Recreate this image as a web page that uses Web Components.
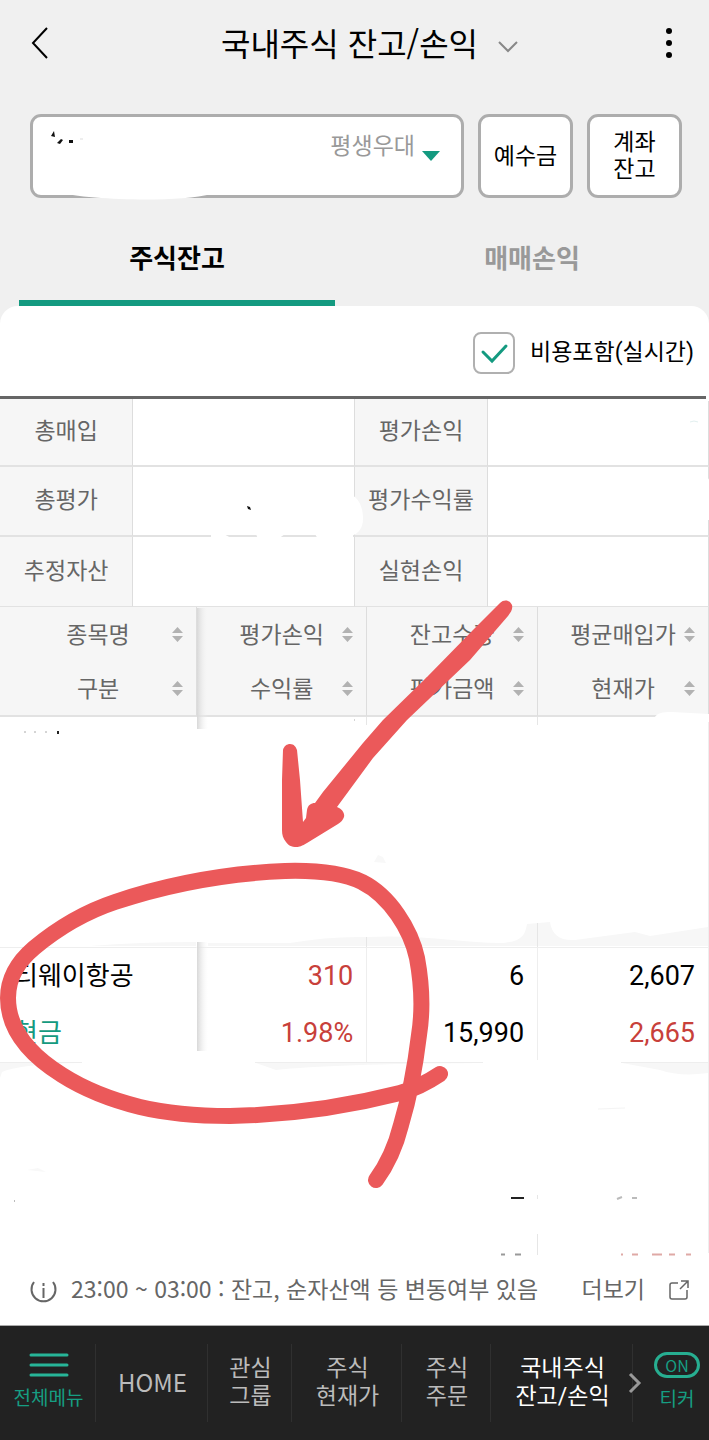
<!DOCTYPE html>
<html lang="ko">
<head>
<meta charset="utf-8">
<meta name="viewport" content="width=device-width, initial-scale=1">
<title>국내주식 잔고/손익</title>
<style>
html,body{margin:0;padding:0}
body{font-family:"Noto Sans CJK KR","Noto Sans",sans-serif;color:#000;background:#f0f0f0}
</style>
</head>
<body>
<balance-page></balance-page>
<script>
const RESET = `<style>
*,*::before,*::after{box-sizing:border-box}
button,select{font:inherit;color:inherit;background:none;border:0;padding:0;margin:0;cursor:pointer}
svg{display:block;fill:none}
</style>`;
const define = (name, html) => customElements.define(name, class extends HTMLElement {
  constructor(){ super(); this.attachShadow({mode:'open'}).innerHTML = RESET + html; }
});

define('app-header', `<style>
:host{display:grid;grid-template-columns:1fr auto 1fr;align-items:center;height:86px;padding:0 30px}
h1{margin:0;padding-left:30px;font-size:32px;line-height:48px;font-weight:400}
h1 button{display:flex;align-items:center;gap:20px;padding-bottom:2px}
h1 svg{margin-top:10px}
.more{justify-self:end;padding:0 7px}
</style>
<button aria-label="뒤로"><svg width="18" height="32" viewBox="0 0 18 32"><path d="M17 1 3 16 17 31" stroke="#000" stroke-width="2"/></svg></button>
<h1><button>국내주식 잔고/손익<svg width="20" height="12" viewBox="0 0 20 12"><path d="M1 1 10 10 19 1" stroke="#888" stroke-width="2"/></svg></button></h1>
<button class="more" aria-label="더보기 메뉴"><svg width="6" height="30" viewBox="0 0 6 30"><g fill="#000"><circle cx="3" cy="3" r="3"/><circle cx="3" cy="15" r="3"/><circle cx="3" cy="27" r="3"/></g></svg></button>`);

define('account-bar', `<style>
:host{display:flex;gap:14px;padding:28px 27px 0 30px;font-family:Roboto,"Noto Sans CJK KR",sans-serif;font-size:23px;line-height:27px}
.pick{position:relative;flex:1;height:84px}
select,.box{height:84px;border:3px solid #adadad;border-radius:11px;background:#fff}
select{appearance:none;width:100%;padding:0 46px 20px 20px;color:#999;text-align-last:right}
.pick svg{position:absolute;right:24px;top:37px;pointer-events:none}
.box{width:95px}
</style>
<div class="pick"><select aria-label="계좌 선택"><option>평생우대</option></select>
<svg width="18" height="10" viewBox="0 0 18 10"><path d="M0 0H18L9 10Z" fill="#149a80"/></svg></div>
<button class="box">예수금</button><button class="box">계좌<br>잔고</button>`);

define('tab-bar', `<style>
:host{display:grid;grid-template-columns:1fr 1fr;gap:39px;padding:0 19px}
button{height:108px;padding-top:16px;border-bottom:6px solid transparent;font-size:26px;line-height:38px;font-weight:700;color:#999}
[aria-selected=true]{color:#000;border-color:#149a80}
</style>
<button role="tab" aria-selected="true">주식잔고</button><button role="tab" aria-selected="false">매매손익</button>`);

define('cost-toggle', `<style>
:host{display:flex;justify-content:flex-end;align-items:center;height:90px;padding:4px 15px 0}
label{display:flex;align-items:center;gap:15px;font-family:Roboto,"Noto Sans CJK KR",sans-serif;font-size:23px;line-height:34px}
.mark{display:grid}
.mark>*{grid-area:1/1}
input{appearance:none;width:42px;height:42px;margin:0;border:2px solid #b0b0b0;border-radius:8px;background:#fff}
svg{pointer-events:none;opacity:0}
input:checked+svg{opacity:1}
</style>
<label><span class="mark"><input type="checkbox" checked><svg width="42" height="42" viewBox="0 0 42 42"><path d="M10 20 19 29 33 14" stroke="#149a80" stroke-width="3" stroke-linecap="round"/></svg></span>비용포함(실시간)</label>`);

define('summary-table', `<style>
:host{display:block;border-top:3px solid #666}
table{width:100%;table-layout:fixed;border-spacing:0}
th,td{height:70px;padding:0 0 6px;border-right:1px solid #ddd;border-bottom:2px solid #e2e2e2}
tr:first-child>*{height:68px}
tr:last-child>*{border-bottom-width:1px}
th{background:#f6f6f6;color:#666;font-size:23px;line-height:34px;font-weight:400;white-space:nowrap}
td{background:#fff}
</style>
<table><colgroup><col style="width:18.8%"><col style="width:31.3%"><col style="width:18.7%"><col></colgroup>
<tr><th scope="row">총매입</th><td></td><th scope="row">평가손익</th><td></td></tr>
<tr><th scope="row">총평가</th><td></td><th scope="row">평가수익률</th><td></td></tr>
<tr><th scope="row">추정자산</th><td></td><th scope="row">실현손익</th><td></td></tr></table>`);

define('sort-label', `<style>
:host{display:block}
button{display:grid;grid-template-columns:24px 1fr 24px;align-items:center;width:100%;height:54px;padding-bottom:2px;font-size:23px;line-height:34px;white-space:nowrap}
span{grid-column:2}
svg{margin-top:3px}
</style>
<button><span><slot></slot></span><svg width="11" height="16" viewBox="0 0 11 16"><path d="M0 6 5.500 0 11 6ZM0 9H11L5.500 15Z" fill="#b2b2b2"/></svg></button>`);

define('holdings-table', `<style>
:host{display:block}
table{width:100%;table-layout:fixed;border-spacing:0}
th,td{padding:0}
thead th{height:110px;background:#f6f6f6;color:#666;font-weight:400;border-right:1px solid #ddd;border-bottom:2px solid #e2e2e2}
.blank td{height:230px}
.blank.last td{height:190px}
td:last-child{border-right:1px solid #eee}
.row>*{height:116px;border-right:1px solid #eee;border-top:1px solid #eee;border-bottom:1px solid #eee;font-family:Roboto,"Noto Sans CJK KR",sans-serif;font-size:27px;line-height:57px;text-align:right;padding-right:13px}
.row th{font-size:26px;font-weight:400;text-align:left;padding:0 0 0 14px;border-right-color:transparent}
.up{color:#c8403a}.kind{color:#149a80}
.row div{height:57px}
</style>
<table><colgroup><col style="width:27.8%"><col style="width:24%"><col style="width:24.1%"><col></colgroup>
<thead><tr>
<th scope="col"><sort-label>종목명</sort-label><sort-label>구분</sort-label></th>
<th scope="col"><sort-label>평가손익</sort-label><sort-label>수익률</sort-label></th>
<th scope="col"><sort-label>잔고수량</sort-label><sort-label>평가금액</sort-label></th>
<th scope="col"><sort-label>평균매입가</sort-label><sort-label>현재가</sort-label></th>
</tr></thead>
<tbody>
<tr class="blank"><td></td><td></td><td></td><td></td></tr>
<tr class="row"><th scope="row"><div>티웨이항공</div><div class="kind">현금</div></th>
<td class="up"><div>310</div><div>1.98%</div></td>
<td><div>6</div><div>15,990</div></td>
<td><div>2,607</div><div class="up">2,665</div></td></tr>
<tr class="blank last"><td></td><td></td><td></td><td></td></tr>
</tbody></table>`);

define('notice-bar', `<style>
:host{display:flex;align-items:center;height:70px;padding:0 20px 4px 30px;color:#666;font-size:23px;line-height:34px;white-space:nowrap}
p{margin:0 auto 0 14px}
a{display:flex;align-items:center;gap:24px;color:inherit;text-decoration:none}
svg{margin-top:7px}
a svg{margin-top:4px}
</style>
<svg width="27" height="26" viewBox="0 0 27 26" stroke="#666" stroke-width="2"><path d="M4 3A12 12 0 1 0 23 3"/><path d="M13.500 9V19M13.500 4V7"/></svg>
<p>23:00 ~ 03:00 : 잔고, 순자산액 등 변동여부 있음</p>
<a href="#more">더보기<svg width="20" height="20" viewBox="0 0 20 20" stroke="#666" stroke-width="1.500"><path d="M9 3H3Q1 3 1 5V17Q1 19 3 19H16Q18 19 18 17V10M12 1H19V8M19 1 11 9"/></svg></a>`);

define('bottom-nav', `<style>
:host{display:block;background:#222;border-top:1px solid #aaa}
nav{display:grid;grid-template-columns:96fr 112fr 84fr 110fr 89fr 142fr 76fr;height:114px;padding:18px 0;color:#bbb;font-family:Roboto,"Noto Sans CJK KR",sans-serif;font-size:23px;line-height:28px}
a{position:relative;display:flex;flex-direction:column;align-items:center;justify-content:center;color:inherit;text-decoration:none;text-align:center;white-space:nowrap;border-right:1px solid #303030;padding-left:2px}
.accent{color:#169e82;font-size:19px;gap:8px}
.home{font-family:"Noto Sans CJK KR",sans-serif;font-size:24px;padding-bottom:2px}
.on{color:#fff}
.on svg{position:absolute;right:-10px;top:28px;z-index:1}
a:last-child{border:0;padding-left:12px}
.pill{border:3px solid #27ae91;border-radius:14px;width:46px;height:26px;font-family:"Noto Sans CJK KR",sans-serif;font-size:16px;line-height:20px}
</style>
<nav>
<a href="#all" class="accent"><svg width="40" height="24" viewBox="0 0 40 24"><path d="M2 2H38M2 12H38M2 22H38" stroke="#27b598" stroke-width="3" stroke-linecap="round"/></svg><span>전체메뉴</span></a>
<a href="#home" class="home">HOME</a>
<a href="#fav">관심<br>그룹</a>
<a href="#price">주식<br>현재가</a>
<a href="#order">주식<br>주문</a>
<a href="#balance" class="on" aria-current="page"><span>국내주식<br>잔고/손익</span><svg width="14" height="22" viewBox="0 0 14 22"><path d="M2 2 11 11 2 20" stroke="#999" stroke-width="3"/></svg></a>
<a href="#ticker" class="accent"><span class="pill">ON</span><span>티커</span></a>
</nav>`);

/* Freehand marks drawn over the whole screen */
define('ink-layer', `<style>
:host{position:absolute;inset:0;pointer-events:none}
svg{width:100%;height:auto}
</style>
<svg viewBox="0 0 709 1440" aria-hidden="true">
<defs><linearGradient id="s"><stop stop-color="#d8d8d8"/><stop offset="1" stop-color="#f6f6f6" stop-opacity="0"/></linearGradient></defs>
<path d="M55 192C90 200 175 203 212 194L205 188H60Z" fill="#fff"/>
<path d="M51 136 54 131 55 137ZM57 143 61 139 63 140 60 144ZM69 140H73V143H69Z" fill="#111"/>
<path d="M80 139H83" stroke="#ddd"/>
<path d="M340 490C358 494 363 505 363 519C363 528 358 534 353 535H340ZM211 534Q220 530 232 539H211ZM256 534H285L278 539H258ZM315 534H353V539H318Z" fill="#fff"/>
<path d="M247 506 250 507 251 510 248 509Z" fill="#111"/>
<path d="M690 422Q694 420 698 422" stroke="#e2efef"/>
<path d="M706 396H709V401H706ZM706 478Q709 478 709 480V520H706ZM654 720Q655 711 672 712L709 714V722H654Z" fill="#fff"/>
<rect x="197" y="608" width="11" height="121" fill="url(#s)"/>
<rect x="197" y="942" width="11" height="109" fill="url(#s)"/>
<path d="M24 732H26M34 732H36M45 732H47M354 720H355" stroke="#aaa"/><path d="M57 731H59V734H57Z" fill="#222"/>
<path d="M366.500 717V725M537.500 717V725M537.500 1195V1199M537.500 1234V1255" stroke="#e6e6e6"/>
<path d="M90 946Q140 942 196 942V946ZM208 943 290 943Q330 936 367 937C420 934 465 943 500 943C520 942 525 937 527 924L550 922C552 935 560 941 575 940L635 932 650 936 708 927V946H208Z" fill="#f7f7f7"/>
<path d="M537.500 923V947M366.500 937V947" stroke="#e6e6e6"/>
<path d="M0 1063H80Q20 1064 2 1072L0 1078ZM256 1063H480Q330 1064 276 1070ZM622 1063H708V1073Q680 1077 660 1070Z" fill="#f7f7f7"/>
<path d="M82 1062H255M483 1062H621" stroke="#fff" stroke-width="4"/>
<path d="M374 862 378 855 383 857 386 863ZM27 1170 38 1168 46 1172Z" fill="#f8f8f8"/>
<path d="M598 1109 625 1108" stroke="#f4f4f4"/>
<path d="M511 1197H524V1199H511Z" fill="#222"/>
<path d="M617 1199 622 1197M632 1198H637M14 1201H15" stroke="#bbb" stroke-width="2"/>
<path d="M501 1254.500H505M515 1254.500H521" stroke="#999" stroke-width="2"/>
<path d="M621 1254.500H623M632 1254.500H638M652 1254.500H662M669 1254.500H675M686 1254.500H691" stroke="#dfa9a6" stroke-width="2"/>
<path d="M500 603C504 599 510 600 512 605C513 609 511 612 508 616L470 660 407 720 373 758 337 807C342 809 345 813 344 817C343 820 341 822 338 824L307 843C302 846 299 847 297 847C291 847 288 845 286 842C283 838 282 835 282 830V780L283 750C284 746 287 744 290 744C294 744 296 747 297 750L300 780 303 822 306 818 307 810C308 805 311 803 315 803L323 792 363 743 383 720 427 677 473 630Z" fill="#eb595a"/>
<path d="M440 1074C425 1084 415 1089 400 1093C345 1107 290 1115 230 1116C200 1116 165 1113 140 1107C112 1100 84 1089 62 1075C30 1055 8 1030 8 998C8 975 20 960 34 948C58 928 88 911 115 902C160 887 215 874 285 871C320 870 345 874 362 882C390 896 411 930 417 958C422 985 423 1010 419 1035C416 1060 410 1095 401 1125C396 1145 387 1165 376 1180" stroke="#eb595a" stroke-width="16" stroke-linecap="round" stroke-linejoin="round"/>
</svg>`);

define('balance-page', `<style>
:host{position:relative;display:flex;flex-direction:column;min-height:100vh}
main{flex:1;background:#fff;border-radius:18px 18px 0 0}
notice-bar{background:#fff}
</style>
<app-header></app-header><account-bar></account-bar><tab-bar></tab-bar>
<main><cost-toggle></cost-toggle><summary-table></summary-table><holdings-table></holdings-table></main>
<notice-bar></notice-bar><bottom-nav></bottom-nav><ink-layer></ink-layer>`);
</script>
</body>
</html>
